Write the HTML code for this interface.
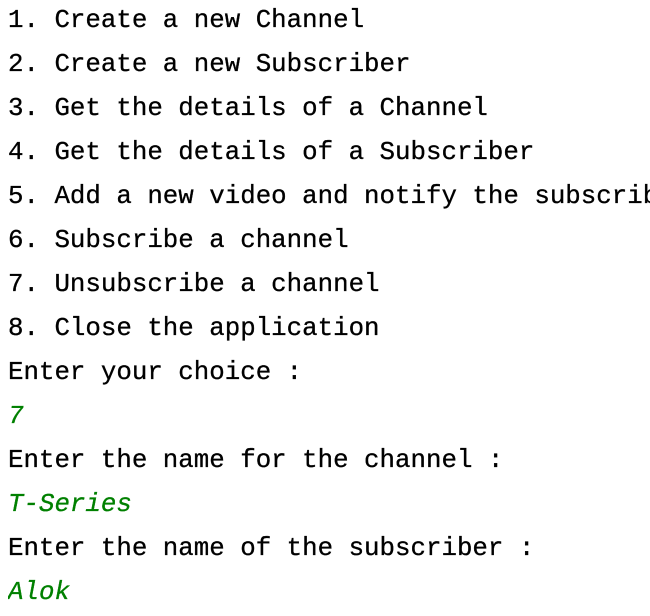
<!DOCTYPE html>
<html><head><style>
html,body{margin:0;padding:0;background:#fff;width:650px;height:616px;overflow:hidden}
pre{margin:0;position:absolute;left:8px;top:-1px;width:642px;overflow:hidden;font-family:"Liberation Mono",monospace;font-size:25.8px;line-height:44px;color:#000;white-space:pre;-webkit-text-stroke:0.3px #000}
.g{color:#008000;font-style:italic;-webkit-text-stroke:0.3px #008000}
</style></head><body>
<pre>1. Create a new Channel
2. Create a new Subscriber
3. Get the details of a Channel
4. Get the details of a Subscriber
5. Add a new video and notify the subscribers
6. Subscribe a channel
7. Unsubscribe a channel
8. Close the application
Enter your choice :
<span class="g">7</span>
Enter the name for the channel :
<span class="g">T-Series</span>
Enter the name of the subscriber :
<span class="g">Alok</span></pre>
</body></html>
